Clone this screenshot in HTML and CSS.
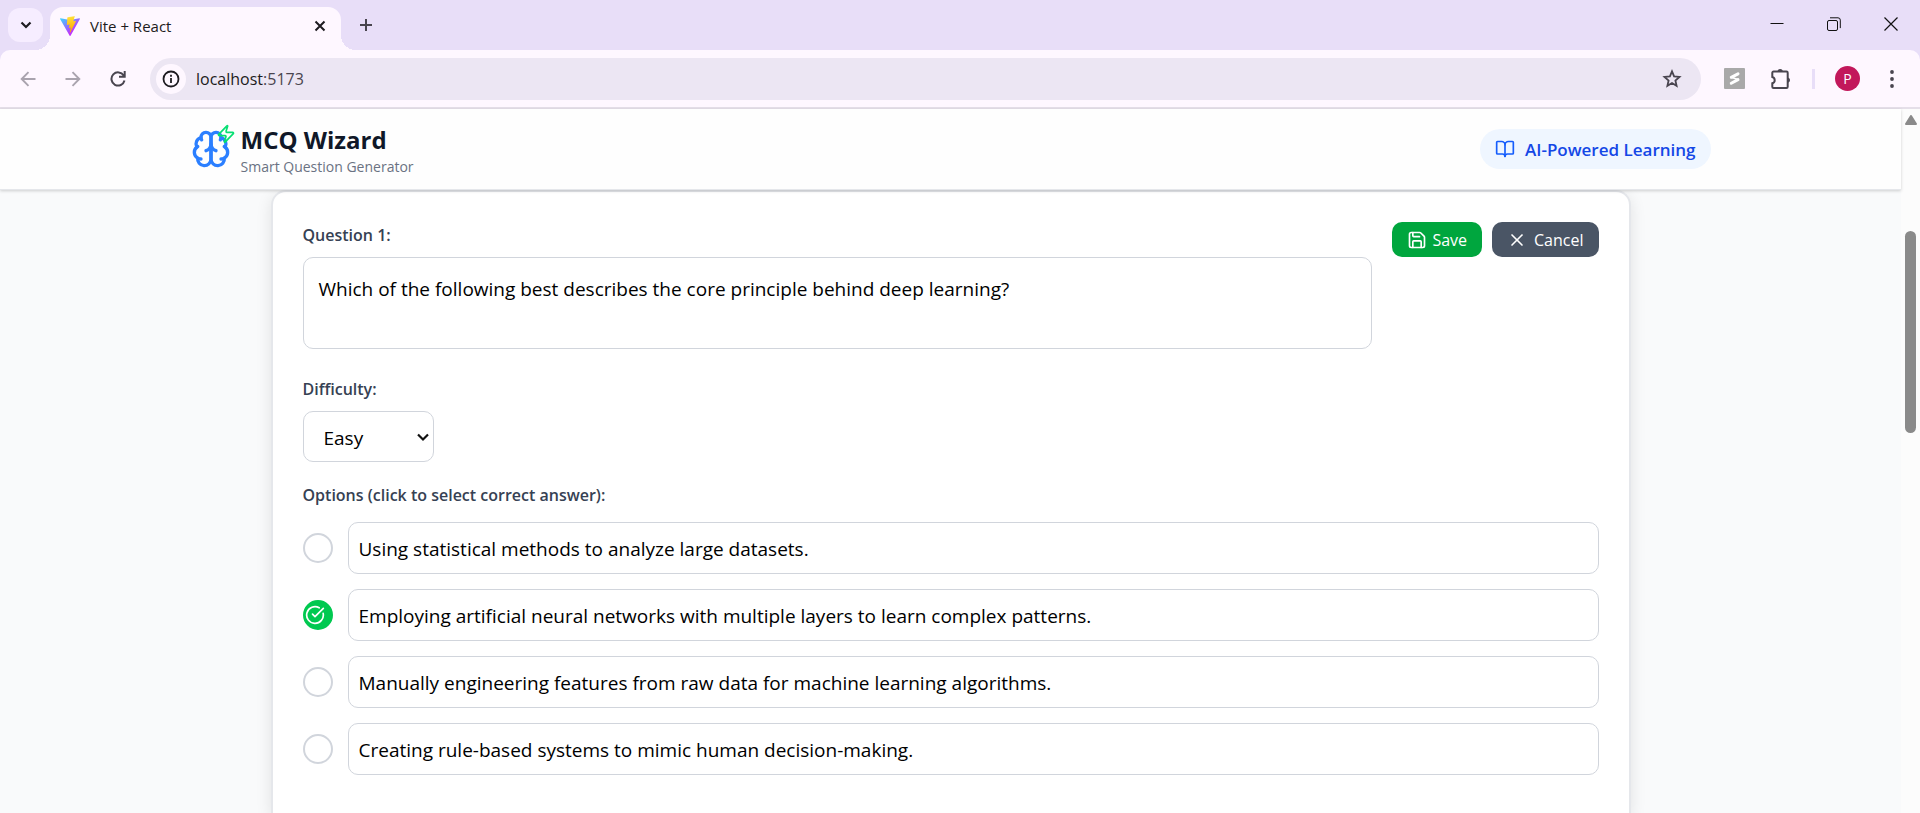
FILE: index.html
```html
<!DOCTYPE html>
<html lang="en">
<head>
<meta charset="utf-8">
<title>Vite + React</title>
<link rel="stylesheet" href="styles.css">
</head>
<body>
<div class="browser">
  <div class="tabstrip">
    <button class="tab-search" aria-label="Search tabs">
      <svg width="12" height="12" viewBox="0 0 12 12"><path d="M1.500 3.500 6 8l4.500-4.500" fill="none" stroke="#1d1b20" stroke-width="2.200"/></svg>
    </button>
    <div class="tab">
      <svg class="favicon" viewBox="0 0 256 257">
        <defs>
          <linearGradient id="va" x1="-.8%" x2="57.600%" y1="7.300%" y2="78.400%"><stop offset="0%" stop-color="#41D1FF"/><stop offset="100%" stop-color="#BD34FE"/></linearGradient>
          <linearGradient id="vb" x1="43.400%" x2="50.300%" y1="2.200%" y2="89%"><stop offset="0%" stop-color="#FFEA83"/><stop offset="8.300%" stop-color="#FFDD35"/><stop offset="100%" stop-color="#FFA800"/></linearGradient>
        </defs>
        <path fill="url(#va)" d="M255.153 37.938L134.897 252.976c-2.483 4.440-8.862 4.466-11.382.048L.875 37.958c-2.746-4.814 1.371-10.646 6.827-9.670l120.385 21.517a6.537 6.537 0 0 0 2.322-.004l117.867-21.483c5.438-.991 9.574 4.796 6.877 9.620Z"/>
        <path fill="url(#vb)" d="M185.432.063L96.440 17.501a3.268 3.268 0 0 0-2.634 3.014l-5.474 92.456a3.268 3.268 0 0 0 3.997 3.378l24.777-5.718c2.318-.535 4.413 1.507 3.936 3.838l-7.361 36.047c-.495 2.426 1.782 4.500 4.151 3.780l15.304-4.649c2.372-.720 4.652 1.360 4.150 3.788l-11.698 56.621c-.732 3.542 3.979 5.473 5.943 2.437l1.313-2.028l72.516-144.720c1.215-2.423-.880-5.186-3.540-4.672l-25.505 4.922c-2.396.462-4.435-1.770-3.759-4.114l16.646-57.705c.677-2.350-1.370-4.583-3.769-4.113Z"/>
      </svg>
      <span class="tab-title">Vite + React</span>
      <button class="tab-close" aria-label="Close tab">
        <svg width="12" height="12" viewBox="0 0 12 12"><path d="m1.500 1.500 9 9m0-9-9 9" stroke="#1d1b20" stroke-width="2"/></svg>
      </button>
    </div>
    <button class="new-tab" aria-label="New tab">
      <svg width="14" height="14" viewBox="0 0 14 14"><path d="M7 1v12M1 7h12" stroke="#49454f" stroke-width="2"/></svg>
    </button>
    <div class="window-controls">
      <button aria-label="Minimize"><svg width="14" height="14" viewBox="0 0 14 14"><path d="M0.500 6.500h13" stroke="#111"/></svg></button>
      <button aria-label="Restore"><svg width="14" height="14" viewBox="0 0 14 14" fill="none" stroke="#111"><rect x=".5" y="3.500" width="10" height="10" rx="1.500"/><path d="M3 .8h8a2.300 2.300 0 0 1 2.300 2.300v8"/></svg></button>
      <button aria-label="Close"><svg width="14" height="14" viewBox="0 0 14 14"><path d="m.5.500 13 13m0-13-13 13" stroke="#111" stroke-width="1.200"/></svg></button>
    </div>
  </div>
  <div class="toolbar">
    <div class="nav">
      <button aria-label="Back"><svg width="16" height="16" viewBox="0 0 16 16" fill="none" stroke="#a9a3ae" stroke-width="1.900"><path d="M15.500 8H2M8.500 1.200 1.700 8l6.800 6.800"/></svg></button>
      <button aria-label="Forward"><svg width="16" height="16" viewBox="0 0 16 16" fill="none" stroke="#a9a3ae" stroke-width="1.900"><path d="M.5 8H14M7.500 1.200 14.300 8l-6.800 6.800"/></svg></button>
      <button aria-label="Reload"><svg width="16" height="16" viewBox="0 0 16 16" fill="none" stroke="#49454f" stroke-width="2"><path d="M13.700 4.500A6.600 6.600 0 1 0 14.500 9.500M14.700 0v5.800H9"/></svg></button>
    </div>
    <div class="omnibox">
      <button class="site-info" aria-label="Site information"><svg width="18" height="18" viewBox="0 0 18 18"><circle cx="9" cy="9" r="7.500" fill="none" stroke="#1d1b20" stroke-width="1.800"/><path d="M9 8v5M9 4.800v2" stroke="#1d1b20" stroke-width="1.800"/></svg></button>
      <span class="url">localhost<span class="port">:5173</span></span>
      <button class="star" aria-label="Bookmark"><svg width="20" height="20" viewBox="0 0 20 20"><path d="m10 2.400 2.100 5 5.400.500-4.100 3.600 1.200 5.300-4.600-2.800-4.600 2.800 1.200-5.300L2.500 7.900l5.400-.5z" fill="none" stroke="#49454f" stroke-width="1.800"/></svg></button>
    </div>
    <div class="extensions">
      <button aria-label="Extension"><svg width="21" height="21" viewBox="0 0 21 21"><rect width="21" height="21" rx="1" fill="#a9a9a9"/><path d="M7.300 9.300 14 5.800M7.300 15.200 14 11.600" stroke="#fff" stroke-width="3" stroke-linecap="round"/><path d="m7.300 9.300 6.700 2.300" stroke="#fff" stroke-width="1.600"/></svg></button>
      <button aria-label="Extensions"><svg width="22" height="22" viewBox="0 0 22 22"><path d="M3.500 3.500h13a1.200 1.200 0 0 1 1.200 1.200v14a1.200 1.200 0 0 1-1.200 1.200h-13a1.200 1.200 0 0 1-1.200-1.200v-3.400c3.200-1 3.200-5.300 0-6.300V4.700a1.200 1.200 0 0 1 1.200-1.200z" fill="none" stroke="#49454f" stroke-width="2"/><path d="M7.500 3a2.800 2.800 0 0 1 5.400 0zM18 9.400a2.800 2.800 0 0 1 0 5.400z" fill="#49454f"/></svg></button>
      <span class="divider"></span>
      <button class="avatar">P</button>
      <button class="menu" aria-label="Menu"><svg width="6" height="20" viewBox="0 0 6 20" fill="#49454f"><circle cx="3" cy="3" r="1.900"/><circle cx="3" cy="10" r="1.900"/><circle cx="3" cy="17" r="1.900"/></svg></button>
    </div>
  </div>
</div>
<div class="viewport">
  <div class="page">
    <header class="app-header">
      <div class="header-inner">
        <div class="brand">
          <div class="logo">
            <svg class="brain" viewBox="0 0 24 24"><path d="M12 5a3 3 0 1 0-5.997.125 4 4 0 0 0-2.526 5.770 4 4 0 0 0 .556 6.588A4 4 0 1 0 12 18Z"/><path d="M12 5a3 3 0 1 1 5.997.125 4 4 0 0 1 2.526 5.770 4 4 0 0 1-.556 6.588A4 4 0 1 1 12 18Z"/><path d="M15 13a4.500 4.500 0 0 1-3-4 4.500 4.500 0 0 1-3 4"/><path d="M17.599 6.500a3 3 0 0 0 .399-1.375"/><path d="M6.003 5.125A3 3 0 0 0 6.401 6.500"/><path d="M3.477 10.896a4 4 0 0 1 .585-.396"/><path d="M19.938 10.500a4 4 0 0 1 .585.396"/><path d="M6 18a4 4 0 0 1-1.967-.516"/><path d="M19.967 17.484A4 4 0 0 1 18 18"/></svg>
            <svg class="zap" viewBox="0 0 24 24"><path d="M4 14a1 1 0 0 1-.780-1.630l9.900-10.200a.5.500 0 0 1 .860.460l-1.920 6.020A1 1 0 0 0 13 10h7a1 1 0 0 1 .780 1.630l-9.900 10.200a.5.500 0 0 1-.860-.460l1.920-6.020A1 1 0 0 0 11 14z"/></svg>
          </div>
          <div class="brand-text">
            <h1>MCQ Wizard</h1>
            <p>Smart Question Generator</p>
          </div>
        </div>
        <div class="pill">
          <svg class="icon" viewBox="0 0 24 24"><path d="M12 7v14"/><path d="M3 18a1 1 0 0 1-1-1V4a1 1 0 0 1 1-1h5a4 4 0 0 1 4 4 4 4 0 0 1 4-4h5a1 1 0 0 1 1 1v13a1 1 0 0 1-1 1h-6a3 3 0 0 0-3 3 3 3 0 0 0-3-3z"/></svg>
          <span>AI-Powered Learning</span>
        </div>
      </div>
    </header>
    <main class="content">
      <form class="card">
        <div class="question-row">
          <div class="question-field">
            <label for="question">Question 1:</label>
            <textarea id="question">Which of the following best describes the core principle behind deep learning?</textarea>
          </div>
          <div class="actions">
            <button type="button" class="btn save"><svg class="icon" viewBox="0 0 24 24"><path d="M15.200 3a2 2 0 0 1 1.400.6l3.800 3.800a2 2 0 0 1 .6 1.400V19a2 2 0 0 1-2 2H5a2 2 0 0 1-2-2V5a2 2 0 0 1 2-2z"/><path d="M17 21v-7a1 1 0 0 0-1-1H8a1 1 0 0 0-1 1v7"/><path d="M7 3v4a1 1 0 0 0 1 1h7"/></svg>Save</button>
            <button type="button" class="btn cancel"><svg class="icon" viewBox="0 0 24 24"><path d="M18 6 6 18"/><path d="m6 6 12 12"/></svg>Cancel</button>
          </div>
        </div>
        <div class="field">
          <label for="difficulty">Difficulty:</label>
          <div class="select-wrap">
            <select id="difficulty"><option>Easy</option><option>Medium</option><option>Hard</option></select>
            <svg class="caret" width="12" height="12" viewBox="0 0 12 12"><path d="M1 3.500 6 8.500l5-5" fill="none" stroke="#111" stroke-width="2.200"/></svg>
          </div>
        </div>
        <fieldset class="options">
          <legend>Options (click to select correct answer):</legend>
          <div class="option"><span class="mark"><input type="radio" name="correct" aria-label="Option 1 is correct"></span><input type="text" aria-label="Option 1" value="Using statistical methods to analyze large datasets."></div>
          <div class="option"><span class="mark"><input type="radio" name="correct" aria-label="Option 2 is correct" checked><svg class="icon check" viewBox="0 0 24 24"><path d="M21.801 10A10 10 0 1 1 17 3.335"/><path d="m9 11 3 3L22 4"/></svg></span><input type="text" aria-label="Option 2" value="Employing artificial neural networks with multiple layers to learn complex patterns."></div>
          <div class="option"><span class="mark"><input type="radio" name="correct" aria-label="Option 3 is correct"></span><input type="text" aria-label="Option 3" value="Manually engineering features from raw data for machine learning algorithms."></div>
          <div class="option"><span class="mark"><input type="radio" name="correct" aria-label="Option 4 is correct"></span><input type="text" aria-label="Option 4" value="Creating rule-based systems to mimic human decision-making."></div>
        </fieldset>
      </form>
    </main>
  </div>
  <div class="scrollbar">
    <svg width="12" height="10" viewBox="0 0 12 10"><path d="M6 1 11 9H1z" fill="#8a8a8a" stroke="#8a8a8a" stroke-width="2" stroke-linejoin="round"/></svg>
    <div class="thumb"></div>
  </div>
</div>
</body>
</html>
```
FILE: styles.css
```css
*, *::before { box-sizing: border-box; }
body {
  margin: 0;
  min-height: 100vh;
  display: flex;
  flex-direction: column;
  font-family: "Open Sans", "Noto Sans", sans-serif;
  color: #000;
  background: #f9fafb;
}
button { font: inherit; border: 0; padding: 0; background: none; color: inherit; display: flex; align-items: center; justify-content: center; }
svg { display: block; flex: none; }
h1, p { margin: 0; }

/* Browser frame */
.browser { background: #e8def8; border-bottom: 2px solid #e5dfe9; }
.tabstrip { display: flex; height: 50px; }
.tab-search { width: 35px; height: 34px; margin: 8px 7px 0 8px; border-radius: 12px; background: #f6edff; }
.tab { position: relative; display: flex; align-items: center; width: 291px; margin-top: 7px; padding: 0 15px 6px 10px; border-radius: 13px 13px 0 0; background: #fef7ff; }
.tab::before { content: ""; position: absolute; bottom: 0; left: -15px; right: -15px; height: 15px;
  background: radial-gradient(circle at 0 0, transparent 15px, #fef7ff 15px) left / 15px 15px no-repeat, radial-gradient(circle at 100% 0, transparent 15px, #fef7ff 15px) right / 15px 15px no-repeat; }
.favicon { width: 20px; height: 20px; }
.tab-title { flex: 1; margin-left: 10px; font-size: 15px; line-height: 18px; color: #1d1b20; }
.new-tab { width: 50px; }
.window-controls { display: flex; margin-left: auto; padding-right: 1px; height: 48px; }
.window-controls button { width: 57px; }
.toolbar { display: flex; align-items: center; height: 57px; border-radius: 10px 10px 0 0; background: #fef7ff; }
.nav { display: flex; gap: 29px; padding: 0 24px 0 20px; }
.omnibox { flex: 1; display: flex; align-items: center; height: 42px; padding: 0 19px 0 6px; border-radius: 21px; background: #ece6f3; }
.site-info { width: 30px; height: 30px; border-radius: 50%; background: #fef7ff; }
.url { flex: 1; margin-left: 10px; font-size: 16px; color: #1d1b20; }
.port { color: #49454f; }
.extensions { display: flex; align-items: center; padding: 0 25px 0 23px; }
.extensions button + button { margin-left: 25px; }
.divider { width: 3px; height: 20px; margin: 0 20px; background: #e8def8; }
.extensions .avatar { width: 25px; height: 25px; border-radius: 50%; background: #c2185b; color: #fff; font-size: 14px; }
.extensions button.menu { margin-left: 29px; }

/* Page area */
.viewport { flex: 1; display: flex; }
.page { flex: 1; display: flex; flex-direction: column; }
.scrollbar { display: flex; flex-direction: column; align-items: center; width: 19px; padding-top: 6px; background: #fcfcfc; }
.thumb { width: 11px; height: 202px; margin-top: 106px; border-radius: 6px; background: #8a8a8a; }

.app-header { position: relative; background: #fefefe; border-bottom: 1px solid #e5e7eb; box-shadow: 0 1px 3px rgba(0, 0, 0, .18); }
.header-inner { display: flex; align-items: center; justify-content: space-between; max-width: 1560px; margin: 0 auto; padding: 10px 20px; }
.brand { display: flex; align-items: center; gap: 10px; }
.logo { position: relative; width: 40px; }
.brain { width: 40px; height: 40px; fill: none; stroke: #2b7fff; stroke-width: 2; stroke-linecap: round; stroke-linejoin: round; }
.zap { position: absolute; top: -5px; right: -5px; width: 20px; height: 20px; fill: none; stroke: #05df72; stroke-width: 2; stroke-linecap: round; stroke-linejoin: round; }
.brand-text { padding-top: 6px; }
.brand-text h1 { font-size: 24px; line-height: 30px; font-weight: 700; color: #101828; }
.brand-text p { font-size: 14px; line-height: 24px; color: #6a7282; }
.icon { width: 20px; height: 20px; fill: none; stroke: currentColor; stroke-width: 2; stroke-linecap: round; stroke-linejoin: round; }
.pill { display: flex; align-items: center; gap: 10px; height: 40px; padding: 0 15px; border-radius: 20px; background: #eff6ff; color: #155dfc; font-size: 17px; font-weight: 600; }
.pill span { color: #1447e6; }

.content { flex: 1; display: flex; width: 100%; max-width: 1360px; margin: 0 auto; }
.card { flex: 1; padding: 30px; border: 2px solid #e5e7eb; border-bottom: 0; border-radius: 15px 15px 0 0; background: #fff; box-shadow: 0 4px 16px rgba(0, 0, 0, .1); }
label, legend { display: block; padding: 0; margin-bottom: 8px; font-size: 16px; line-height: 27px; font-weight: 600; color: #364153; }
.question-row { display: flex; align-items: flex-start; gap: 20px; margin-bottom: 27px; }
.question-field { flex: 1; }
textarea, select, input[type="text"] { font: inherit; font-size: 19px; color: #000; background: #fff; border: 1px solid #d1d5dc; border-radius: 10px; }
textarea { display: block; width: 100%; height: 92px; padding: 15px; line-height: 32px; resize: none; }
.actions { display: flex; gap: 10px; }
.btn { height: 35px; padding: 0 15px; border-radius: 10px; color: #fff; font-size: 16px; }
.save { gap: 5px; background: #00a63e; }
.cancel { gap: 7px; background: #4a5565; }
.field { margin-bottom: 20px; }
.select-wrap { position: relative; width: 131px; }
select { appearance: none; display: block; width: 100%; height: 51px; padding: 2px 20px 0; }
.caret { position: absolute; right: 5px; top: 20px; pointer-events: none; }
.options { border: 0; margin: 0; padding: 0; min-width: 0; }
.option { display: flex; align-items: center; gap: 15px; margin-top: 15px; }
legend + .option { margin-top: 5px; }
.mark { position: relative; display: flex; }
.mark input { appearance: none; width: 30px; height: 30px; margin: 0; border: 2px solid #d1d5dc; border-radius: 50%; }
.mark input:checked { border-color: #00c950; background: #00c950; }
.check { position: absolute; left: 2px; top: 5px; color: #fff; pointer-events: none; }
input[type="text"] { flex: 1; min-width: 0; height: 52px; padding: 2px 10px 0; }
```
